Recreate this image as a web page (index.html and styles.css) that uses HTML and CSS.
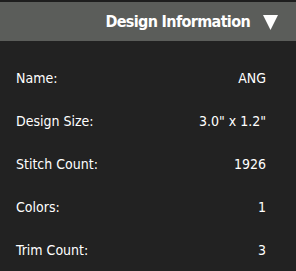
FILE: index.html
```html
<!DOCTYPE html>
<html>
<head>
<meta charset="utf-8">
<link rel="stylesheet" href="styles.css">
</head>
<body>
<div class="panel">
  <div class="header">
    <span class="title">Design Information</span>
    <svg class="caret" width="15" height="15" viewBox="0 0 15 15"><polygon points="0,0 15,0 7.5,15" fill="#ffffff"/></svg>
  </div>
  <div class="rows">
    <div class="row"><span class="label">Name:</span><span class="value">ANG</span></div>
    <div class="row"><span class="label">Design Size:</span><span class="value">3.0" x 1.2"</span></div>
    <div class="row"><span class="label">Stitch Count:</span><span class="value">1926</span></div>
    <div class="row"><span class="label">Colors:</span><span class="value">1</span></div>
    <div class="row"><span class="label">Trim Count:</span><span class="value">3</span></div>
  </div>
</div>
</body>
</html>
```
FILE: styles.css
```css
html, body {
  margin: 0;
  padding: 0;
  background: #222222;
}
.panel {
  width: 296px;
  height: 271px;
  background: #222222;
  border-top: 2px solid #1e1e1e;
  box-sizing: border-box;
  font-family: "DejaVu Sans Condensed", "DejaVu Sans", sans-serif;
  color: #ffffff;
}
.header {
  height: 39px;
  background: #5b5d5a;
  display: flex;
  align-items: center;
  justify-content: flex-end;
  padding-right: 18px;
  gap: 13px;
}
.title {
  font-weight: bold;
  font-size: 16px;
  letter-spacing: -0.65px;
}
.caret {
  display: block;
  margin-top: 1px;
}
.rows {
  padding: 16px 30px 0 16px;
}
.row {
  display: flex;
  justify-content: space-between;
  height: 43px;
  line-height: 43px;
  font-size: 14px;
}
```
